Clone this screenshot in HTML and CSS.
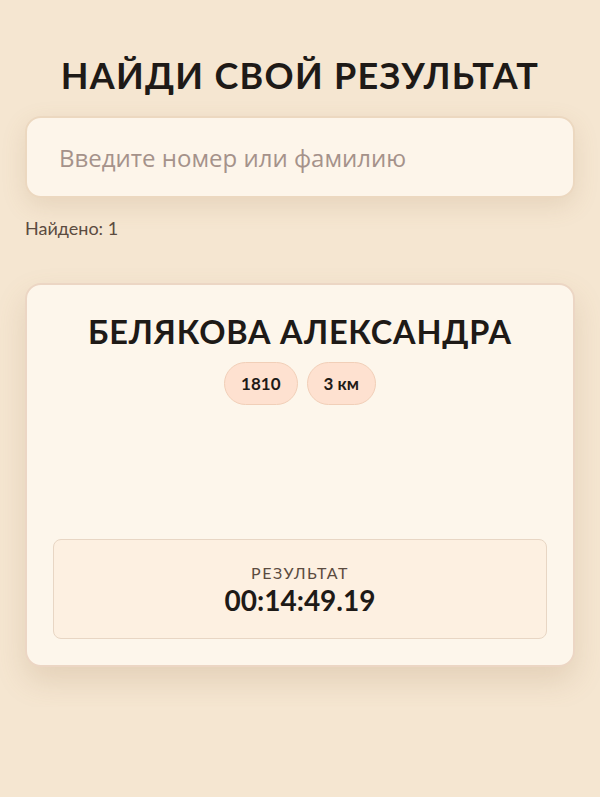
FILE: index.html
```html
<!DOCTYPE html>
<html lang="ru">
<head>
    <meta charset="UTF-8">
    <meta name="viewport" content="width=device-width, initial-scale=1.0">
    <title>Найди свой результат</title>
    <link rel="stylesheet" href="styles.css">
</head>
<body>
    <div class="page">
        <h1 class="title">НАЙДИ СВОЙ РЕЗУЛЬТАТ</h1>

        <input type="text" class="search" placeholder="Введите номер или фамилию">

        <div class="found">Найдено: 1</div>

        <div class="card">
            <div class="name">БЕЛЯКОВА АЛЕКСАНДРА</div>
            <div class="tags">
                <span class="tag">1810</span>
                <span class="tag">3 км</span>
            </div>

            <div class="result">
                <div class="result-label">РЕЗУЛЬТАТ</div>
                <div class="result-time">00:14:49.19</div>
            </div>
        </div>
    </div>
</body>
</html>
```

FILE: styles.css
```css
body {
    margin: 0;
    background-color: #f5e6d1;
    font-family: Lato, "Noto Sans", sans-serif;
    color: #1e1a17;
}

.page {
    padding: 48px 25px 40px;
}

.title {
    margin: 0 0 14px;
    text-align: center;
    font-size: 36px;
    font-weight: 700;
    letter-spacing: 1.3px;
    line-height: 54px;
}

.search {
    display: block;
    width: 100%;
    box-sizing: border-box;
    height: 82px;
    padding: 0 32px;
    border: 2px solid #ecd8c0;
    border-radius: 16px;
    background: #fdf5ea;
    box-shadow: 0 8px 24px rgba(150, 110, 70, 0.15);
    font-family: "Open Sans", sans-serif;
    font-size: 24px;
    outline: none;
}

.search::placeholder {
    color: #a5928a;
}

.found {
    margin-top: 19px;
    font-size: 18px;
    color: #5b4b40;
}

.card {
    margin-top: 44px;
    padding: 28px 26px 26px;
    border: 2px solid #ecd6c4;
    border-radius: 16px;
    background: #fdf6eb;
    box-shadow: 0 14px 30px rgba(150, 110, 70, 0.18);
}

.name {
    text-align: center;
    font-size: 32.5px;
    font-weight: 700;
    letter-spacing: 0.8px;
    line-height: 38px;
}

.tags {
    display: flex;
    justify-content: center;
    gap: 9px;
    margin-top: 11px;
}

.tag {
    padding: 0 16px;
    height: 41px;
    line-height: 41px;
    border: 1px solid #f1cfb8;
    border-radius: 22px;
    background: #fee1d0;
    font-size: 17px;
    font-weight: 700;
}

.result {
    margin-top: 134px;
    padding: 23px 0 21px;
    border: 1px solid #e8d6c4;
    border-radius: 8px;
    background: #fdf0e1;
    text-align: center;
}

.result-label {
    font-size: 16px;
    letter-spacing: 1.5px;
    color: #5b4b40;
}

.result-time {
    margin-top: 1px;
    font-size: 28px;
    font-weight: 700;
}
```
